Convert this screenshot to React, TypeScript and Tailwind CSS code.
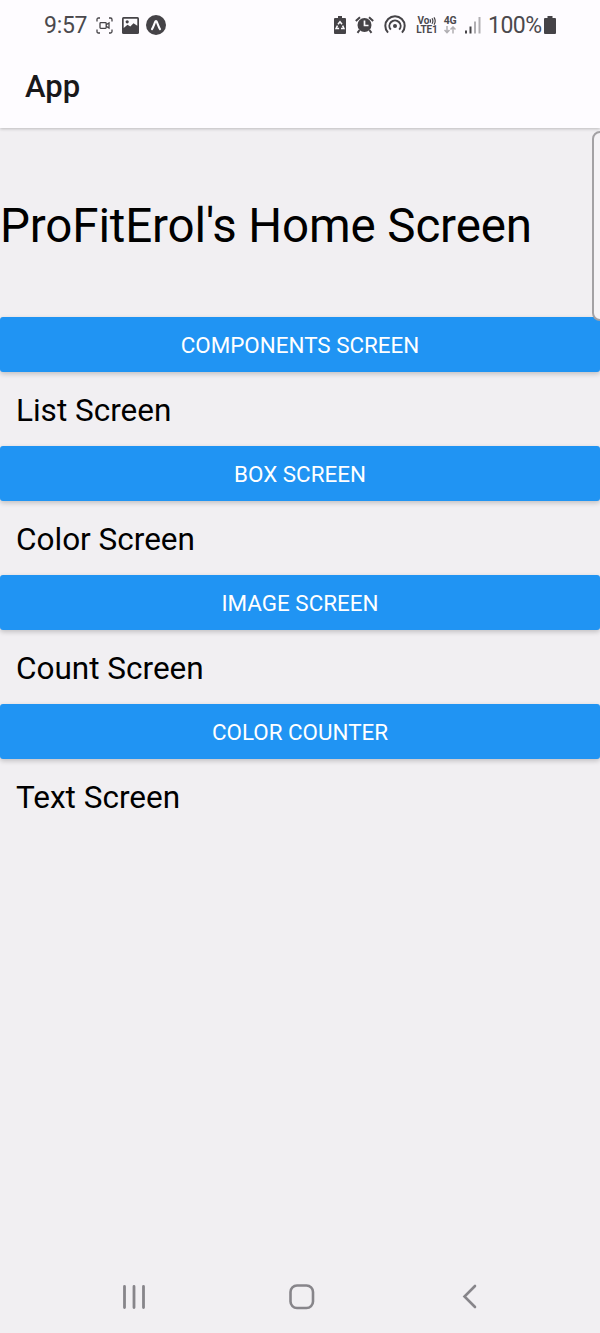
import React from "react";

const ink = "#454347";

function StatusBar() {
  return (
    <div className="flex h-[50px] items-center pl-[44px] text-[#4b494d]">
      <span className="w-[52px] whitespace-nowrap pt-px text-[23px] leading-[50px] tracking-[-0.3px]">9:57</span>
      <svg width="17" height="17" viewBox="0 0 17 17" fill="none" stroke={ink} strokeWidth="1.3">
        <path d="M1 4.5V2.5Q1 1 2.5 1H4M13 1h1.5Q16 1 16 2.5v2M16 12.5v2q0 1.5-1.500 1.500H13M4 16H2.500Q1 16 1 14.500v-2" />
        <rect x="4" y="5.700" width="6.200" height="5.600" rx=".8" />
        <path d="M10.200 7.700 13 6v5l-2.800-1.700" />
      </svg>
      <svg className="ml-[9px]" width="17" height="17" viewBox="0 0 17 17">
        <rect width="17" height="17" rx="1.5" fill={ink} />
        <path d="M1.700 1.700h13.600v7L11.500 6.200 8.300 9.500 5.500 7.700 1.700 11Z" fill="#fdfcff" />
        <circle cx="5.200" cy="4.800" r="1.600" fill={ink} />
      </svg>
      <svg className="ml-[7px]" width="20" height="20" viewBox="0 0 20 20">
        <circle cx="10" cy="10" r="10" fill={ink} />
        <path d="M6 14.200C7.500 12 8.500 8 9.500 6.300q.5-.7 1 0C11.500 8 12.500 12 14 14.200" fill="none" stroke="#fdfcff" strokeWidth="2.100" strokeLinecap="round" />
      </svg>
      <svg className="ml-[168px]" width="12" height="18" viewBox="0 0 12 18">
        <path d="M4 0h4v2h3q1 0 1 1v14q0 1-1 1H1q-1 0-1-1V3q0-1 1-1h3Z" fill={ink} />
        <path d="M4 8.300 6 5.700l2 2.600M8.600 9.700l1.300 2.700H7M5.100 12.400h-3l1.400-2.700" fill="none" stroke="#fdfcff" strokeWidth="1.500" />
      </svg>
      <svg className="ml-[9px]" width="19" height="18" viewBox="0 0 19 18">
        <circle cx="9.500" cy="9" r="7" fill={ink} />
        <path d="M.8 5 5 1.200M18.200 5 14 1.200M4.600 14 2.500 16.800M14.400 14l2.100 2.800" stroke={ink} strokeWidth="2" />
        <path d="M9.500 4.500V9.500h4" fill="none" stroke="#fdfcff" strokeWidth="1.700" />
      </svg>
      <svg className="ml-[10px] -mt-px" width="22" height="19" viewBox="0 0 22 19" fill="none" stroke={ink} strokeWidth="2">
        <path d="M4 17.600A9.700 9.700 0 1 1 18 17.600" />
        <path d="M6.800 14.700A5.600 5.600 0 1 1 15.200 14.700" />
        <circle cx="11" cy="11" r="2" fill={ink} stroke="none" />
      </svg>
      <div className="ml-[10px] w-[22px] whitespace-nowrap text-center text-[10px] font-bold leading-[9px]">
        <div className="flex justify-center">
          <span>Vo</span>
          <svg className="mt-px" width="7" height="8" viewBox="0 0 7 8" fill="none" stroke={ink} strokeWidth="1.200">
            <path d="M1 2.300q1 1.700 0 3.400M3 1.200q1.800 2.800 0 5.600M5 .3q2.400 3.700 0 7.400" />
          </svg>
        </div>
        <div className="tracking-[-0.1px]">LTE1</div>
      </div>
      <div className="ml-[5px] flex w-[14px] flex-col items-center text-[10.500px] font-bold leading-[9px] tracking-[-0.3px]">
        <span>4G</span>
        <svg className="mt-[1px]" width="12" height="8" viewBox="0 0 12 8" fill="none" stroke="#b1afb3" strokeWidth="1.500">
          <path d="M3 0v6.500M.5 4 3 6.600 5.500 4M9 7.500V1M6.500 3.600 9 1l2.500 2.600" />
        </svg>
      </div>
      <svg className="ml-[8px]" width="16" height="18" viewBox="0 0 16 18">
        <path d="M0 14.500h2V17.500H0ZM4.500 10.500h2V17.500h-2Z" fill={ink} />
        <path d="M9 5.500h2V17.500H9ZM13.500 1h2v16.500h-2Z" fill="#b1afb3" />
      </svg>
      <span className="ml-[7px] w-[56px] whitespace-nowrap pt-px text-[23px] leading-[50px] tracking-[-0.500px]">100%</span>
      <svg width="12" height="18" viewBox="0 0 12 18">
        <path d="M3.500 0h5v2H11q1 0 1 1v14q0 1-1 1H1q-1 0-1-1V3q0-1 1-1h2.500Z" fill={ink} />
      </svg>
    </div>
  );
}

function ScreenButton({ label }: { label: string }) {
  return (
    <button className="flex h-[55px] w-full shrink-0 items-center justify-center rounded-[3px] bg-[#2094f3] pt-[2px] text-[22.400px] text-white shadow-[0_2px_5px_rgba(0,0,0,0.200)]">
      {label}
    </button>
  );
}

function ScreenLink({ label }: { label: string }) {
  return <div className="h-[74px] pl-[16px] pt-[2px] text-[31.500px] leading-[74px] text-black">{label}</div>;
}

const rows = [
  ["COMPONENTS SCREEN", "List Screen"],
  ["BOX SCREEN", "Color Screen"],
  ["IMAGE SCREEN", "Count Screen"],
  ["COLOR COUNTER", "Text Screen"],
];

export default function App() {
  return (
    <div className="flex h-[1333px] w-[600px] flex-col overflow-hidden bg-[#f1eff2] font-['Roboto',sans-serif]">
      <header className="z-10 h-[128px] shrink-0 bg-[#fefcff] shadow-[0_1px_3px_rgba(0,0,0,0.220)]">
        <StatusBar />
        <h1 className="pl-[25px] pt-px text-[31px] font-medium leading-[72px] text-[#19181a]">App</h1>
      </header>
      <main className="relative flex flex-1 flex-col">
        <h2 className="h-[189px] whitespace-nowrap pt-px text-[47.500px] leading-[194px] tracking-[-0.130px] text-black">ProFitErol's Home Screen</h2>
        {rows.map(([button, link]) => (
          <section key={button}>
            <ScreenButton label={button} />
            <ScreenLink label={link} />
          </section>
        ))}
        <div className="absolute left-[592px] top-[3px] h-[190px] w-[20px] rounded-[8px] border-2 border-[#a3a1a4] bg-[#f5f3f6] [clip-path:inset(0_12px_0_0)]" />
      </main>
      <nav className="flex h-[73px] shrink-0 items-center pl-[122px]">
        <svg width="24" height="24" viewBox="0 0 24 24" stroke="#87858a" strokeWidth="2.800" strokeLinecap="round">
          <path d="M2.500 1.500v21M12 1.500v21M21.500 1.500v21" />
        </svg>
        <svg className="ml-[143px]" width="26" height="26" viewBox="0 0 26 26" fill="none" stroke="#87858a" strokeWidth="2.600">
          <rect x="1.500" y="1.500" width="22.500" height="22.500" rx="6.500" />
        </svg>
        <svg className="ml-[147px]" width="15" height="25" viewBox="0 0 15 25" fill="none" stroke="#87858a" strokeWidth="2.600" strokeLinecap="round">
          <path d="M13 2 2.500 12.500 13 23" />
        </svg>
      </nav>
    </div>
  );
}
